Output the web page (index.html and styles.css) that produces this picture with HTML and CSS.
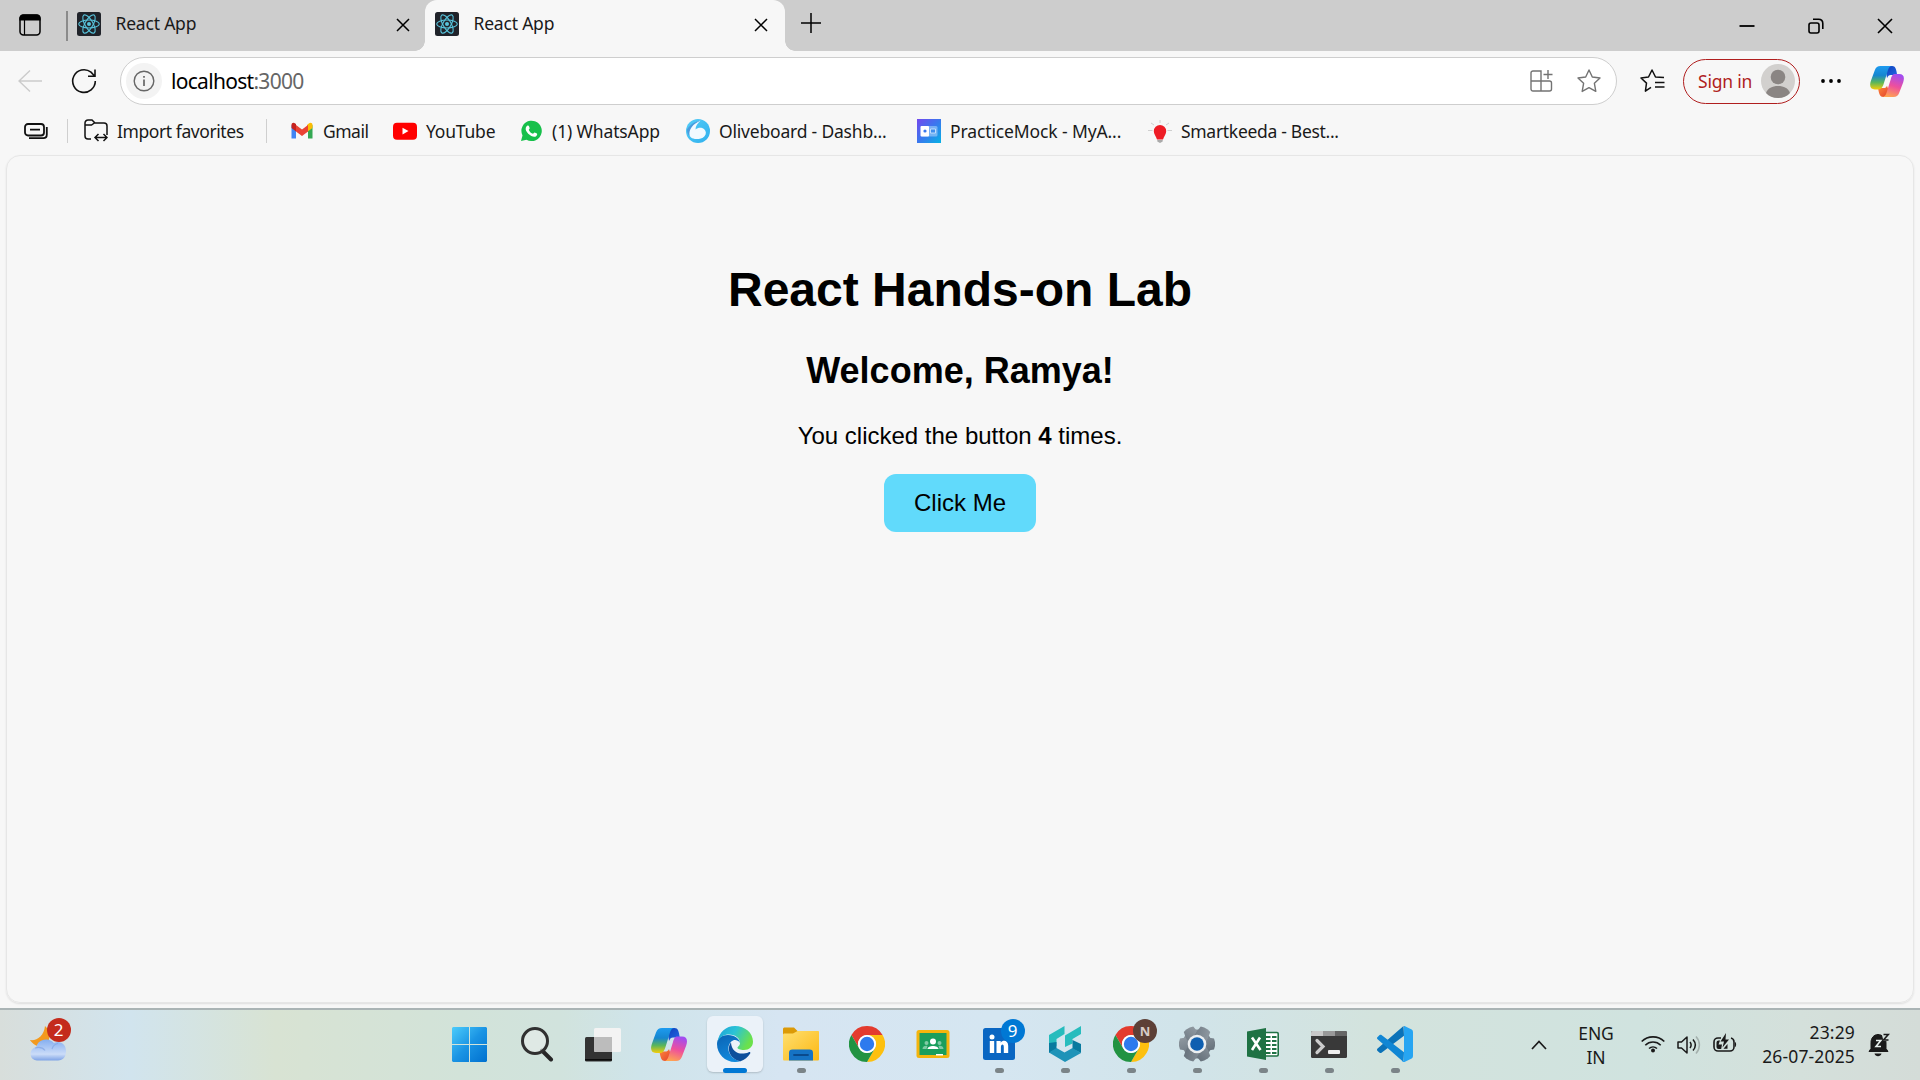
FILE: index.html
```html
<!DOCTYPE html>
<html lang="en">
<head>
<meta charset="utf-8">
<title>React App</title>
<link rel="stylesheet" href="styles.css">
</head>
<body>
<svg class="defs" width="0" height="0" aria-hidden="true">
  <defs>
    <linearGradient id="cpA" x1="0" y1="0" x2="0" y2="1"><stop offset="0" stop-color="#1d9bf0"/><stop offset=".4" stop-color="#1686cf"/><stop offset=".7" stop-color="#5bb65a"/><stop offset="1" stop-color="#f5cd0a"/></linearGradient>
    <linearGradient id="cpB" x1="0" y1="0" x2="1" y2="1"><stop offset="0" stop-color="#0d3fb8"/><stop offset="1" stop-color="#2468e8"/></linearGradient>
    <linearGradient id="cpC" x1=".6" y1="0" x2=".3" y2="1"><stop offset="0" stop-color="#a24df0"/><stop offset=".5" stop-color="#ee4f9d"/><stop offset="1" stop-color="#ffa650"/></linearGradient>
    <linearGradient id="cpD" x1="0" y1="0" x2="1" y2="1"><stop offset="0" stop-color="#ff8a3c"/><stop offset="1" stop-color="#e2412e"/></linearGradient>
    <linearGradient id="winG" x1="0" y1="0" x2="1" y2="1"><stop offset="0" stop-color="#4cccfb"/><stop offset=".5" stop-color="#1a94e4"/><stop offset="1" stop-color="#0070cf"/></linearGradient>
    <linearGradient id="edA" x1="0" y1="0" x2="1" y2=".4"><stop offset="0" stop-color="#1c9fd8"/><stop offset=".5" stop-color="#2bc3d6"/><stop offset="1" stop-color="#6be14c"/></linearGradient>
    <linearGradient id="edB" x1="0" y1="0" x2=".4" y2="1"><stop offset="0" stop-color="#0b63b4"/><stop offset="1" stop-color="#1189dc"/></linearGradient>
    <linearGradient id="foG" x1="0" y1="0" x2="1" y2="1"><stop offset="0" stop-color="#ffdf70"/><stop offset="1" stop-color="#fcb813"/></linearGradient>
    <linearGradient id="clG" x1="0" y1="0" x2="0" y2="1"><stop offset="0" stop-color="#84aef0"/><stop offset=".7" stop-color="#cbdcf8"/><stop offset="1" stop-color="#7ea3e6"/></linearGradient>
    <linearGradient id="geG" x1="0" y1="0" x2="1" y2="1"><stop offset="0" stop-color="#919aa2"/><stop offset="1" stop-color="#65707a"/></linearGradient>
    <linearGradient id="pmG" x1="0" y1="0" x2="1" y2="1"><stop offset="0" stop-color="#7348ee"/><stop offset=".5" stop-color="#3a78ee"/><stop offset="1" stop-color="#06b2e4"/></linearGradient>
    <linearGradient id="olG" x1="0" y1="0" x2="1" y2="1"><stop offset="0" stop-color="#55cdf7"/><stop offset="1" stop-color="#2fb0ee"/></linearGradient>
    <symbol id="react" viewBox="0 0 24 24"><rect width="24" height="24" rx="2.500" fill="#20232a"/><g fill="none" stroke="#58c4dc" stroke-width="1.100"><ellipse cx="12" cy="12" rx="10.300" ry="4"/><ellipse cx="12" cy="12" rx="10.300" ry="4" transform="rotate(60 12 12)"/><ellipse cx="12" cy="12" rx="10.300" ry="4" transform="rotate(120 12 12)"/></g><circle cx="12" cy="12" r="2" fill="#58c4dc"/></symbol>
    <symbol id="copilot" viewBox="0 0 36 33"><path d="M16 0h7.500c3.500 0 4.300 3 5.300 9.500H22c-2 0-3 1-4 3.500Z" fill="url(#cpB)"/><path d="M8.500 23.500H14c2 0 3-.5 4-2.500l2 6c-1 4-2 6-6 6-3.500 0-4.500-3-5.500-9.500Z" fill="url(#cpD)"/><path d="M11 0h12.500c-2.500 0-3.700 2-4.500 4.500L14.500 19c-1.400 4.400-2.700 6-6 6H5C.5 25-1 21.500.8 16L5 4.500C6.200 1.200 8 0 11 0Z" fill="url(#cpA)"/><path d="M26.500 8.500H31c4.800 0 6 3.500 4.200 9L31 28.500c-1.200 3.300-3 4.500-6 4.500H13c2.500 0 3.700-2 4.500-4.500L22 14c1.200-4 2-5.500 4.500-5.500Z" fill="url(#cpC)"/></symbol>
    <symbol id="chrome" viewBox="0 0 36 36"><path d="M18 9H33.590A18 18 0 0 0 2.410 9L10.200 22.500A9 9 0 0 1 18 9Z" fill="#e33b2e"/><path d="M18 9H33.590A18 18 0 0 0 2.410 9L10.200 22.500A9 9 0 0 1 18 9Z" transform="rotate(120 18 18)" fill="#fdc00f"/><path d="M18 9H33.590A18 18 0 0 0 2.410 9L10.200 22.500A9 9 0 0 1 18 9Z" transform="rotate(240 18 18)" fill="#229342"/><circle cx="18" cy="18" r="9" fill="#fff"/><circle cx="18" cy="18" r="7.200" fill="#2d7aee"/></symbol>
    <symbol id="close" viewBox="0 0 14 14"><path d="M1 1l12 12M13 1L1 13" fill="none" stroke="#000" stroke-width="1.500"/></symbol>
  </defs>
</svg>

<div class="screen">
  <header class="tabstrip">
    <div class="workspaces"><svg width="22" height="22" viewBox="0 0 22 22"><rect x="1" y="1" width="20" height="20" rx="3.500" fill="none" stroke="#000" stroke-width="1.500"/><path d="M1 6V4a3 3 0 0 1 3-3h14a3 3 0 0 1 3 3v2ZM5.500 6v15" stroke="#000" stroke-width="1.200"/></svg></div>
    <div class="tab tab-idle"><svg width="24" height="24"><use href="#react"/></svg><span class="label">React App</span><svg class="x" width="14" height="14"><use href="#close"/></svg></div>
    <div class="tab tab-active"><svg width="24" height="24"><use href="#react"/></svg><span class="label">React App</span><svg class="x" width="14" height="14"><use href="#close"/></svg></div>
    <svg class="newtab" width="22" height="22" viewBox="0 0 22 22"><path d="M11 1v20M1 11h20" stroke="#000" stroke-width="1.500"/></svg>
    <div class="caption">
      <svg width="16" height="16" viewBox="0 0 16 16"><path d="M.5 8h15" stroke="#000" stroke-width="1.800"/></svg>
      <svg width="16" height="16" viewBox="0 0 16 16"><g fill="none" stroke="#000" stroke-width="1.600"><rect x="1" y="5" width="10" height="10" rx="2"/><path d="M5 1.300h5.500c2.500 0 4.300 1.800 4.300 4.300V11"/></g></svg>
      <svg width="16" height="16" viewBox="0 0 16 16"><path d="M1 1l14 14M15 1L1 15" stroke="#000" stroke-width="1.600"/></svg>
    </div>
  </header>

  <nav class="toolbar">
    <svg class="back" width="24" height="24" viewBox="0 0 24 24"><path d="M24 12H1M12 1.500L1 12l11 10.500" fill="none" stroke="#cbcbcb" stroke-width="1.400"/></svg>
    <svg class="reload" width="26" height="26" viewBox="0 0 26 26"><path d="M24.300 13A11.300 11.300 0 1 1 20 4.200L23.500 8M24 1.500V8.300h-7" fill="none" stroke="#111" stroke-width="1.600"/></svg>
    <div class="omnibox">
      <span class="info"><svg width="22" height="22" viewBox="0 0 22 22"><circle cx="11" cy="11" r="9.800" fill="none" stroke="#666" stroke-width="1.400"/><path d="M11 9.500V16M11 6v1.800" stroke="#666" stroke-width="1.700"/></svg></span>
      <span class="url">localhost<span class="port">:3000</span></span>
      <svg class="apps" width="23" height="22" viewBox="0 0 23 22"><path d="M1 3a2 2 0 0 1 2-2h8v20H3a2 2 0 0 1-2-2ZM1 11h18.500a2 2 0 0 1 2 2v6a2 2 0 0 1-2 2H11M18 0v9M13.500 4.500h9" fill="none" stroke="#737373" stroke-width="1.400"/></svg>
      <svg class="star" width="24" height="24" viewBox="0 0 24 24"><path d="M12 1l3.300 7 7.700 1-5.600 5.300 1.400 8.100L12 18.700l-6.800 3.700 1.400-8.100L1 9l7.700-1Z" fill="none" stroke="#737373" stroke-width="1.400" stroke-linejoin="round"/></svg>
    </div>
    <svg class="favs" width="25" height="24" viewBox="0 0 25 24"><path d="M11 18.300l-5.600 3.800 1.100-8L1 9l7.500-1L12 1l3.500 7 8.500.6M15 13.500h9.500M15 18h9.500" fill="none" stroke="#111" stroke-width="1.500" stroke-linejoin="round"/></svg>
    <div class="signin"><span class="signin-text">Sign in</span><svg width="34" height="34" viewBox="0 0 34 34"><circle cx="17" cy="17" r="17" fill="#d2d0ce"/><circle cx="17" cy="13" r="7.300" fill="#8a8583"/><path d="M5 29C7 24 11 22 17 22s10 2 12 7c-3 3.500-7 5-12 5S8 32.500 5 29Z" fill="#8a8583"/></svg></div>
    <svg class="more" width="20" height="4" viewBox="0 0 20 4"><circle cx="2" cy="2" r="1.900"/><circle cx="10" cy="2" r="1.900"/><circle cx="18" cy="2" r="1.900"/></svg>
    <svg class="copilot" width="34" height="31"><use href="#copilot"/></svg>
  </nav>

  <nav class="favorites">
    <svg class="collapse" width="24" height="17" viewBox="0 0 24 17"><g fill="none" stroke="#111" stroke-width="1.800"><rect x="1" y="1" width="19" height="11.500" rx="3"/><path d="M6 6.700h10M22.800 4v7.500c0 2.500-1 3.700-3.500 3.700H5"/></g></svg>
    <i class="sep"></i>
    <div class="fav fav-import"><svg width="24" height="24" viewBox="0 0 24 24"><path d="M7 20H4a3 3 0 0 1-3-3V4a3 3 0 0 1 3-3h4l3 3h9a3 3 0 0 1 3 3v9M1 6h6.500L11 3.500M11 18.500h12M14.500 15L11 18.500l3.500 3.500M19.500 15l3.500 3.500-3.500 3.500" fill="none" stroke="#111" stroke-width="1.500"/></svg><span class="label">Import favorites</span></div>
    <i class="sep"></i>
    <div class="fav fav-gmail"><svg width="24" height="24" viewBox="0 0 24 24"><path d="M1.500 6v13.500H6V9Z" fill="#4285f4"/><path d="M22.500 6v13.500H18V9Z" fill="#34a853"/><path d="M17 8v5l5.500-4V6c0-2-2-2.800-3.700-1.600L17 6Z" fill="#fbbc04"/><path d="M6 12.500V6l6 4.500L18 6v6.500L12 17Z" fill="#ea4335"/><path d="M1.500 6c0-2.300 2.200-2.800 3.700-1.600L6 5v7.500L1.500 9Z" fill="#c5221f"/></svg><span class="label">Gmail</span></div>
    <div class="fav fav-youtube"><svg width="24" height="24" viewBox="0 0 24 24"><rect y="3.700" width="24" height="17" rx="4" fill="#f00"/><path d="M9.500 8.800v6.600l6-3.300Z" fill="#fff"/></svg><span class="label">YouTube</span></div>
    <div class="fav fav-whatsapp"><svg width="24" height="24" viewBox="0 0 24 24"><path d="M2 22l1.500-5.500A10.200 10.200 0 1 1 7.500 20.700Z" fill="#17c04b"/><path d="M8.500 6.500c.8-.3 1.200 0 1.500.8l.7 1.700c.2.600-.9 1.300-.9 1.900 1 2 2.300 3.100 4.200 3.800.6 0 1.100-1.300 1.700-1.200l2.200 1.100c.6.300.2 2-.8 2.600-1.300.9-3.200.5-4.800-.3-2.500-1.200-4-2.900-5.200-5.100-.9-1.800-.3-4.500 1.400-5.300Z" fill="#fff"/></svg><span class="label">(1) WhatsApp</span></div>
    <div class="fav fav-olive"><svg width="24" height="24" viewBox="0 0 24 24"><circle cx="12" cy="12" r="12" fill="url(#olG)"/><path d="M14.500 1.500C11.500 4.500 9.500 7 9.500 10.500c2.500-2.200 6-2.500 8.500-.5 2.300 2 2.500 5 .5 7.200C16.500 19.500 13.500 20 10.500 20 6 20 3 18 3 13.500 3 8 8 3.500 14.500 1.500Z" fill="#f2faff"/><path d="M14.500 1.500C9 2.500 4 5.500 1 10.500c0 3 1 5 2.500 6.500C2.500 10 7 5 14.500 1.500Z" fill="#4a9bdd"/></svg><span class="label">Oliveboard - Dashb...</span></div>
    <div class="fav fav-practice"><svg width="24" height="24" viewBox="0 0 24 24"><rect width="24" height="24" fill="url(#pmG)"/><rect x="4" y="7" width="16.500" height="10.500" rx="1.500" fill="#8fc3f7" opacity=".75"/><rect x="3.500" y="7" width="8.500" height="10.500" rx="1" fill="#fff"/><circle cx="8" cy="12" r="1.600" fill="#3a78ee"/><path d="M13.500 10h5v4h-5Z" fill="#3f8eec" stroke="#d5eaff" stroke-width=".8"/></svg><span class="label">PracticeMock - MyA...</span></div>
    <div class="fav fav-smart"><svg width="24" height="24" viewBox="0 0 24 24"><path d="M12 1v3M3 4l3 2M21 4l-3 2M0 11.500h4.500M19.500 11.500H24" stroke="#cfcfcf" stroke-width="1"/><path d="M12 6a6.200 6.200 0 0 1 6.200 6.200c0 3-2.200 5-3.200 8.300H9c-1-3.300-3.200-5.300-3.200-8.300A6.200 6.200 0 0 1 12 6Z" fill="#ee1c25"/><path d="M9.300 21h5.400v1.500L12 24l-2.700-1.500Z" fill="#aaa"/></svg><span class="label">Smartkeeda - Best...</span></div>
  </nav>

  <main class="viewport">
    <h1>React Hands-on Lab</h1>
    <h2>Welcome, Ramya!</h2>
    <p>You clicked the button <strong>4</strong> times.</p>
    <button type="button">Click Me</button>
  </main>

  <footer class="taskbar">
    <div class="weather"><svg width="36" height="46" viewBox="0 0 36 46"><path d="M0 23c7 1 14-4 15-14 5 4 6 12 2 18S4 29 0 23Z" fill="#f39a1e"/><path d="M7 43.500a6.700 6.700 0 0 1-1-13.300 10.500 10.500 0 0 1 18-4.200c6-3 12 1 12 8 0 6-3 9.500-8 9.500Z" fill="url(#clG)"/><path d="M5 31c5-1.500 8 0 10 2.500M22 32c1-3 3-5 6-5.500" fill="none" stroke="#7fa2e3" stroke-width="1.200" opacity=".7"/></svg><span class="badge badge-red">2</span></div>
    <div class="apps-row">
      <div class="app start"><svg width="35" height="35" viewBox="0 0 35 35"><path d="M1 0h16v17H0V1ZM18 0h16l1 1v16H18ZM0 18h17v17H1l-1-1ZM18 18h17v16l-1 1H18Z" fill="url(#winG)"/></svg></div>
      <div class="app"><svg width="34" height="36" viewBox="0 0 34 36"><path d="M22 24.500l9 9" stroke="#262626" stroke-width="4" stroke-linecap="round"/><circle cx="15" cy="15" r="12.500" fill="#e6ecea" fill-opacity=".65" stroke="#303030" stroke-width="3"/></svg></div>
      <div class="app"><svg width="36" height="35" viewBox="0 0 36 35"><rect y="10" width="27" height="24.500" rx="1.500" fill="#333"/><path d="M0 32h27v1.500H0Z" fill="#0b0b0b"/><rect x="9" y="1" width="27" height="24" rx="1.500" fill="#f3f3f3"/><path d="M9 10h18v15H10.500L9 23.500Z" fill="#bcbcbc"/></svg></div>
      <div class="app"><svg width="36" height="33"><use href="#copilot"/></svg></div>
      <div class="app selected"><svg width="36" height="36" viewBox="0 0 36 36"><path d="M0 18C0 12 5 9 11 9c7 0 11.500 4 12 8-2-3-5-3.500-7-2.500-4 2-5.500 6.500-4 11.500 2 5.500 7 9 12 9-2 .7-4 1-6 1C8 36 0 28 0 18Z" fill="url(#edB)"/><path d="M.5 16C2 6 9 0 18 0c10 0 18 7 18 15.500 0 5.500-4 8.500-9 8.500-4 0-6.500-1-6.500-2.200S23 20 23 17c0-5-5-8.500-11-8.500C6.500 8.500 2.500 11 .5 16Z" fill="url(#edA)"/><path d="M14 16.500C9.500 22 12 33 23.500 35.200c4-1.200 7.500-4 9.700-7.700.6-1.100-.4-1.800-1.500-1.300C23 30 14.500 26 14 16.500Z" fill="#0d4f9c"/></svg><i class="run active"></i></div>
      <div class="app"><svg width="36" height="34" viewBox="0 0 36 34"><path d="M0 2.500C0 1 .5.500 2 .500h9l3.500 3.500H34v8H0Z" fill="#dc9a07"/><path d="M0 8c0-1 .5-1.500 1.500-1.500H10L14.500 4H35c.7 0 1 .3 1 1v27c0 1-.5 1.500-1.500 1.500h-33C.5 33.500 0 33 0 32Z" fill="url(#foG)"/><path d="M6 33.500V26c0-2.500 1-3.500 3.500-3.500h17c2.500 0 3.500 1 3.500 3.500v7.500Z" fill="#1573c4"/><path d="M11 28h14" stroke="#0a4a8c" stroke-width="1.800" stroke-linecap="round"/></svg><i class="run"></i></div>
      <div class="app"><svg width="36" height="36"><use href="#chrome"/></svg></div>
      <div class="app"><svg width="34" height="28" viewBox="0 0 34 28"><rect x=".5" width="33" height="28" rx="2.500" fill="#f4b40d"/><rect x="3.500" y="3" width="27" height="22" fill="#1a9e5c"/><circle cx="17" cy="11.500" r="3" fill="#fff"/><path d="M11.500 19c0-4 11-4 11 0Z" fill="#fff"/><g fill="#7fcaa4"><circle cx="10.500" cy="13" r="2"/><circle cx="23.500" cy="13" r="2"/><path d="M6.500 19c0-3 3-3.500 5-3l-1 3ZM27.500 19c0-3-3-3.500-5-3l1 3Z"/></g><path d="M20 24h7v1.500h-7Z" fill="#fff"/></svg></div>
      <div class="app"><svg width="36" height="32" viewBox="0 0 36 32"><rect x="2" width="32" height="32" rx="2.500" fill="#0a66c2"/><circle cx="11" cy="9" r="2.500" fill="#fff"/><path d="M8.800 13h4.400v12H8.800ZM15.500 13h4.200v1.700c2-3 7.500-2.600 7.500 3V25h-4.400v-6c0-3.500-2.900-3-2.900 0v6h-4.400Z" fill="#fff"/></svg><span class="badge badge-blue">9</span><i class="run"></i></div>
      <div class="app"><svg width="34" height="36" viewBox="0 0 34 36"><path d="M1 9L16.500 0v8L8.500 13v7L1 17ZM17 9.500L33 0v8l-8.500 5v4.500L17 21Z" fill="#27bcbd"/><path d="M1 17l7.500-1v7L1 27ZM24.500 14l8.500 4v9l-8.500-4Z" fill="#087a9f"/><path d="M1 26.500L8.500 22l8 4.500 8-4.500 8.500 5L17 36Z" fill="#1e93b8"/></svg><i class="run"></i></div>
      <div class="app"><svg width="36" height="36"><use href="#chrome"/></svg><span class="badge badge-brown">N</span><i class="run"></i></div>
      <div class="app"><svg width="36" height="36" viewBox="0 0 36 36"><g fill="url(#geG)"><circle cx="18" cy="18" r="14.500"/><path d="M0 16l1-3.500 6-1h22l6 1 1 3.500v4l-1 3.500-6 1H7l-6-1L0 20Z"/><path d="M0 16l1-3.500 6-1h22l6 1 1 3.500v4l-1 3.500-6 1H7l-6-1L0 20Z" transform="rotate(60 18 18)"/><path d="M0 16l1-3.500 6-1h22l6 1 1 3.500v4l-1 3.500-6 1H7l-6-1L0 20Z" transform="rotate(120 18 18)"/></g><circle cx="18" cy="18" r="9.300" fill="#eceff1"/><circle cx="18" cy="18" r="6.800" fill="#0f5fb0"/></svg><i class="run"></i></div>
      <div class="app"><svg width="32" height="32" viewBox="0 0 32 32"><rect x="15" y="4.500" width="16.200" height="23.500" rx="1.200" fill="#fff" stroke="#1f7244" stroke-width="1.600"/><path d="M19 9h4.500M19 13h4.500M19 17h4.500M19 21h4.500M19 25h4.500M25 9h4.500M25 13h4.500M25 17h4.500M25 21h4.500M25 25h4.500" stroke="#1f7244" stroke-width="2.200"/><path d="M0 3.500L19 0v32L0 28.500Z" fill="#1f7244"/><path d="M5 9.500L13.500 22M13 9.500L5 22" stroke="#fff" stroke-width="2.600"/></svg><i class="run"></i></div>
      <div class="app"><svg width="36" height="27" viewBox="0 0 36 27"><rect width="36" height="27" rx="1.500" fill="#393939"/><path d="M0 5V1.500Q0 0 1.500 0H12v5Z" fill="#c9c9c9"/><path d="M12 0h12v5H12Z" fill="#999"/><path d="M24 0h10.500Q36 0 36 1.500V5H24Z" fill="#666"/><path d="M6 9.500l6 6-6 6" fill="none" stroke="#ccc" stroke-width="3.200" stroke-linecap="round"/><rect x="17" y="19" width="12" height="4" rx="1" fill="#eee"/></svg><i class="run"></i></div>
      <div class="app"><svg width="36" height="36" viewBox="0 0 36 36"><path d="M26.500 0L.6 22.500c-.8.700-.8 1.700 0 2.400l2 1.800c.5.500 1.300.5 1.900.1L27 9.800Z" fill="#0b72b8"/><path d="M26.500 36L.6 13.300c-.8-.700-.8-1.700 0-2.400l2-1.800c.5-.5 1.300-.5 1.900-.1L27 26.200Z" fill="#1086d4"/><path d="M27 .3q-.5-.5.500-.2L34.700 3.600Q36 4.300 36 6v24q0 1.700-1.300 2.400L27.500 35.900Q25.500 36.400 25 35.500q2 .5 2-2Z" fill="#27a5f2"/></svg><i class="run"></i></div>
    </div>
    <div class="tray">
      <svg class="chev" width="16" height="10" viewBox="0 0 16 10"><path d="M1 9l7-7.500L15 9" fill="none" stroke="#1a1a1a" stroke-width="1.700"/></svg>
      <div class="lang"><span>ENG</span><span>IN</span></div>
      <svg class="wifi" width="24" height="18" viewBox="0 0 24 18"><g fill="none" stroke="#1a1a1a" stroke-width="1.600"><path d="M.7 6.500a16 16 0 0 1 22.600 0M4.300 10.200a11 11 0 0 1 15.400 0M8 13.500a6 6 0 0 1 8 0"/></g><circle cx="12" cy="15.500" r="2" fill="#1a1a1a"/></svg>
      <svg class="sound" width="24" height="20" viewBox="0 0 24 20"><g fill="none" stroke="#1a1a1a" stroke-width="1.500" stroke-linejoin="round"><path d="M1 7h3.500L10 2v16l-5.500-5H1ZM13 7c1.500 2 1.500 4 0 6M16 4.500c3 3.500 3 7.500 0 11"/><path d="M19 1.500c4.500 5 4.500 12 0 17" opacity=".25"/></g></svg>
      <svg class="battery" width="24" height="20" viewBox="0 0 24 20"><path d="M8 5H5a4 4 0 0 0-4 4v5a4 4 0 0 0 4 4h12a4 4 0 0 0 4-4V9c0-2-1-3.500-3-4" fill="none" stroke="#1a1a1a" stroke-width="1.600"/><path d="M22 9v5c1.500-.5 1.500-4.500 0-5Z" fill="#1a1a1a"/><path d="M3.500 9.500Q3.500 7.500 5.500 7.500H7L5.500 11.500H9L8.200 16H5.500q-2 0-2-2Z" fill="#1a1a1a"/><path d="M10.500 15.800L14.500 11v4.800Z" fill="#1a1a1a"/><path d="M13 0L7.500 8.500H11L9.500 14.500 16 6.500h-3.500Z" fill="#1a1a1a"/></svg>
      <div class="clock"><span>23:29</span><span>26-07-2025</span></div>
      <svg class="bell" width="22" height="24" viewBox="0 0 22 24"><path d="M1 18.500l2-3V9.500C3 5 6 1.500 10 1.500S18 5 18 9.500v6l2 3Z" fill="#1a1a1a" stroke="#1a1a1a" stroke-linejoin="round"/><path d="M6.500 20.500h7c-.7 3.500-6.300 3.500-7 0Z" fill="#1a1a1a"/><path d="M13.500 0H22v8h-6.500Z" fill="#d4dfdb"/><path d="M15.500 1.500h4.800L15.500 7h5" fill="none" stroke="#1a1a1a" stroke-width="1.600"/><path d="M8 7.500h4.800L8 13.500h5" fill="none" stroke="#e6eeeb" stroke-width="1.600"/></svg>
    </div>
  </footer>
</div>
</body>
</html>
```
FILE: styles.css
```css
* { box-sizing: border-box; }
body { margin: 0; background: #f7f7f7; overflow: hidden; font-family: "Noto Sans", "Open Sans", sans-serif; color: #1a1a1a; }
svg { display: block; flex: none; }
.defs { position: absolute; }
.screen { width: 1920px; height: 1080px; display: flex; flex-direction: column; background: #f7f7f7; }
.label { font-size: 17.5px; line-height: 24px; letter-spacing: -0.2px; white-space: nowrap; }

.tabstrip { height: 51px; flex: none; display: flex; align-items: center; background: #cdcdcd; }
.workspaces { width: 68px; height: 30px; padding: 3px 0 0 19px; border-right: 2px solid #8b8b8b; flex: none; }
.tab { display: flex; align-items: center; height: 51px; padding-bottom: 3px; flex: none; }
.tab .label { margin: -1px 0 1px 14.5px; flex: 1; }
.tab-idle { width: 357px; padding-left: 9px; padding-right: 15px; border-bottom-right-radius: 11px; }
.tab-active { width: 360px; padding-left: 10px; padding-right: 17px; background: #f7f7f7; border-radius: 12px 12px 0 0; position: relative; }
.tab-active::before, .tab-active::after { content: ""; position: absolute; bottom: 0; width: 10px; height: 10px; }
.tab-active::before { left: -10px; background: radial-gradient(circle at 0 0, transparent 9.5px, #f7f7f7 10px); }
.tab-active::after { right: -10px; background: radial-gradient(circle at 100% 0, transparent 9.5px, #f7f7f7 10px); }
.x { margin-top: 2px; }
.newtab { margin: -5px 0 0 15px; }
.caption { margin: 0 0 0 auto; display: flex; gap: 53px; padding-right: 27px; }

.toolbar { height: 60px; flex: none; display: flex; align-items: center; }
.back { margin-left: 18px; }
.reload { margin-left: 29px; }
.omnibox { width: 1497px; height: 48px; margin-left: 23px; padding: 0 15px 0 5px; display: flex; align-items: center; background: #fff; border: 1.5px solid #cecece; border-radius: 24px; flex: none; }
.info { width: 36px; height: 36px; border-radius: 50%; background: #f3f3f3; display: flex; align-items: center; justify-content: center; }
.url { margin-left: 9px; font-size: 21px; line-height: 28px; letter-spacing: -0.7px; color: #000; }
.url .port { color: #666; }
.apps { margin-left: auto; margin-right: 24px; }
.favs { margin-left: 23px; }
.signin { width: 117px; height: 45px; margin-left: 18px; padding: 0 4px 0 14px; display: flex; align-items: center; justify-content: space-between; border: 1.5px solid #b01e1e; border-radius: 23px; flex: none; }
.signin-text { font-size: 17.5px; color: #b01e1e; letter-spacing: -0.2px; }
.more { margin-left: 21px; }
.copilot { margin-left: 29px; }

.favorites { height: 44px; flex: none; display: flex; align-items: center; padding: 0 0 4px 24px; }
.sep { width: 1px; height: 24px; background: #cfcfcf; flex: none; }
.collapse { margin-right: 19px; }
.fav { display: flex; align-items: center; gap: 9px; flex: none; }
.fav-import { width: 182px; margin-left: 16px; }
.fav-gmail { width: 103px; margin-left: 23px; }
.fav-youtube { width: 126px; }
.fav-whatsapp { width: 167px; }
.fav-olive { width: 231px; }
.fav-practice { width: 231px; }
.fav-import .label { letter-spacing: -0.42px; }
.fav-gmail .label { letter-spacing: -0.5px; }
.fav-whatsapp .label, .fav-olive .label, .fav-practice .label { letter-spacing: -0.12px; }
.fav-olive .label { letter-spacing: -0.2px; }
.fav-smart .label { letter-spacing: -0.3px; }

.viewport { height: 848px; margin: 0 6px; flex: none; padding-top: 106px; display: flex; flex-direction: column; align-items: center; font-family: "Liberation Sans", Arial, sans-serif; color: #000; border: 1px solid #e6e6e6; border-radius: 14px; box-shadow: 0 1px 2px rgba(0,0,0,.1); }
.viewport h1 { margin: 0 0 33px; font-size: 48px; line-height: 55px; }
.viewport h2 { margin: 0 0 31px; font-size: 36px; line-height: 41px; }
.viewport p { margin: 0 0 24px; font-size: 24px; line-height: 28px; }
.viewport button { width: 152px; height: 58px; padding: 0; border: 0; border-radius: 12px; background: #61dafb; font: 24px "Liberation Sans", Arial, sans-serif; color: #000; }

.taskbar { height: 72px; margin-top: auto; flex: none; display: flex; border-top: 2px solid #aab4b5; background: linear-gradient(90deg, #d8dedb 0, #d1e4ee 130px, #d8e3d3 275px, #d2e3d9 460px, #d1e3dd 560px, #cfe4ea 640px, #d6e5f2 780px, #d5e6f1 1000px, #d1e4ea 1180px, #d3e3dd 1380px, #d0e3df 1640px, #d4e0db 1800px, #d4dcd8 1920px); }
.weather { width: 438px; padding: 7px 0 0 30px; position: relative; }
.badge { position: absolute; width: 24px; height: 24px; border-radius: 50%; color: #fff; font-size: 17px; line-height: 24px; text-align: center; }
.badge-red { left: 46.5px; top: 8px; background: #c42b1c; }
.badge-blue { right: 7.5px; top: 9px; background: #0078d4; }
.badge-brown { right: 7px; top: 9px; background: #5d4037; font-size: 13px; font-weight: 700; color: #d7ccc8; }
.apps-row { display: flex; }
.app { width: 66px; height: 70px; display: flex; align-items: center; justify-content: center; position: relative; padding-bottom: 2px; z-index: 0; }
.start { padding-right: 4px; }
.run { position: absolute; left: 28.5px; top: 58px; width: 9px; height: 5px; border-radius: 3px; background: #7b8488; }
.run.active { left: 21px; width: 24px; background: #0078d4; }
.selected::before { content: ""; position: absolute; z-index: -1; left: 5px; top: 6px; width: 56px; height: 56px; border-radius: 6px; background: #ebf2f9; box-shadow: 0 1px 2px rgba(0,0,0,.18); }
.tray { display: flex; align-items: center; flex: 1; font-size: 17.5px; line-height: 24px; }
.chev { margin-left: 103px; margin-top: -1px; }
.lang, .clock { display: flex; flex-direction: column; letter-spacing: -0.1px; }
.lang { width: 36px; margin-left: 31px; align-items: center; }
.wifi { margin-left: 27px; margin-top: -2px; }
.sound { margin-left: 12px; margin-top: -1px; }
.battery { margin-left: 12px; margin-top: -5px; }
.clock { width: 110px; margin-left: 8px; align-items: flex-end; margin-top: -3px; letter-spacing: 0.15px; }
.bell { margin-left: 13px; }
```
